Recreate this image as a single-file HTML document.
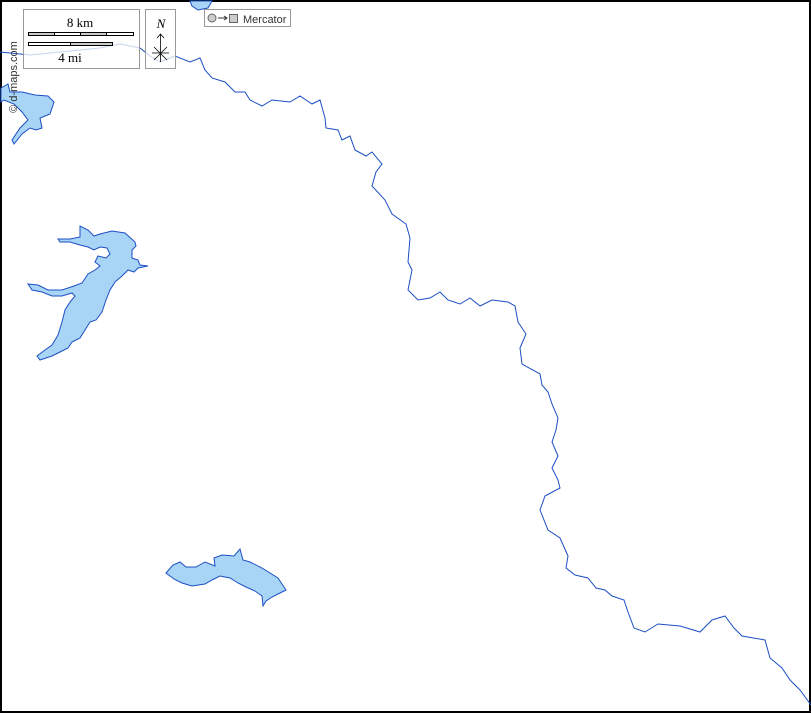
<!DOCTYPE html>
<html><head><meta charset="utf-8"><style>
html,body{margin:0;padding:0;background:#fff}
svg{display:block}
text{font-family:"Liberation Serif",serif}
</style></head><body>
<svg width="811" height="713" viewBox="0 0 811 713" xmlns="http://www.w3.org/2000/svg">
<rect x="1" y="1" width="809" height="711" fill="#fff" stroke="#000" stroke-width="2"/>
<g fill="#a8d4f5" stroke="#1c4fc4" stroke-width="1">
<path d="M190,1 L212,1 L208,8 L198,10 L192,6 Z"/>
<path d="M1,88 L8,84 L10,92 L22,92 L35,95 L48,96 L54,102 L50,114 L40,118 L42,128 L36,130 L30,128 L22,134 L14,144 L12,140 L20,128 L28,120 L22,112 L14,104 L4,100 L1,102 Z"/>
<path d="M28,284 L38,285 L48,290 L62,290 L74,286 L82,283 L88,274 L95,270 L100,266 L95,262 L98,256 L106,258 L110,254 L107,248 L100,247 L94,250 L88,247 L80,245 L70,242 L60,242 L58,239 L70,239 L80,237 L80,226 L88,230 L94,236 L100,234 L112,231 L125,233 L135,242 L136,246 L132,250 L132,258 L138,260 L140,265 L148,266 L138,268 L134,272 L128,270 L122,276 L115,282 L110,290 L106,300 L102,312 L96,320 L90,322 L85,330 L80,338 L72,342 L68,348 L60,352 L52,356 L40,360 L37,356 L45,350 L52,345 L58,335 L62,322 L65,310 L70,302 L75,296 L72,293 L62,296 L52,296 L42,292 L32,290 Z"/>
<path d="M166,573 L173,565 L180,562 L186,567 L196,567 L205,562 L215,566 L214,558 L222,555 L234,556 L240,549 L243,560 L250,562 L262,568 L270,573 L278,578 L286,590 L280,593 L272,597 L266,601 L263,606 L262,596 L255,591 L246,587 L238,583 L230,578 L220,576 L212,580 L205,584 L192,586 L182,583 L174,579 Z"/>
</g>
<path fill="none" stroke="#1c4fc4" stroke-width="1" d="M0,52 L30,55 L60,52 L100,48 L120,44 L140,48 L150,56 L160,62 L175,56 L190,62 L200,58 L205,70 L212,78 L225,82 L235,92 L245,92 L250,100 L262,106 L272,100 L290,102 L300,96 L312,104 L320,100 L325,118 L326,128 L338,130 L342,140 L350,136 L355,150 L366,156 L372,152 L382,164 L376,172 L372,186 L385,200 L392,214 L406,224 L410,238 L408,262 L412,270 L408,290 L418,300 L430,298 L440,292 L448,300 L460,304 L470,298 L480,306 L492,300 L508,302 L515,306 L518,322 L526,334 L520,348 L522,364 L540,374 L542,385 L548,392 L552,404 L558,418 L556,430 L552,442 L558,456 L552,468 L558,480 L560,488 L545,496 L540,510 L548,530 L560,538 L568,556 L566,568 L575,575 L588,578 L596,588 L605,590 L612,596 L624,600 L628,612 L634,628 L645,632 L658,624 L680,626 L700,632 L712,620 L725,616 L734,628 L742,636 L765,640 L770,658 L782,668 L790,680 L800,690 L811,705"/>
<rect x="23.5" y="9.5" width="116" height="59" fill="#fff" fill-opacity="0.75" stroke="#999"/>
<text x="80" y="27" font-size="13" text-anchor="middle">8 km</text>
<rect x="28.5" y="32.5" width="105" height="3" fill="#fff" stroke="#000"/>
<rect x="28.5" y="32.5" width="26" height="3" fill="#ccc" stroke="#000"/>
<rect x="80.5" y="32.5" width="26" height="3" fill="#ccc" stroke="#000"/>
<rect x="28.5" y="42.5" width="84" height="3" fill="#fff" stroke="#000"/>
<rect x="70.5" y="42.5" width="42" height="3" fill="#ccc" stroke="#000"/>
<text x="70" y="62" font-size="13" text-anchor="middle">4 mi</text>
<rect x="145.5" y="9.5" width="30" height="59" fill="#fff" fill-opacity="0.75" stroke="#999"/>
<text x="161" y="28" font-size="13" font-style="italic" text-anchor="middle">N</text>
<path d="M160.5,34 L160.5,62 M157,38 L160.5,34 L164,38 M152,53 L169,53 M154,47 L167,60 M167,47 L154,60" stroke="#000" fill="none" stroke-width="0.8"/>
<rect x="204.5" y="9.5" width="86" height="17" fill="#fff" stroke="#999"/>
<circle cx="212" cy="18" r="4" fill="#ccc" stroke="#666"/>
<path d="M218,18 L227,18 M224,16 L227,18 L224,20" stroke="#333" fill="none"/>
<rect x="229.5" y="14.5" width="8" height="8" fill="#ccc" stroke="#666"/>
<text x="243" y="23" font-size="11" fill="#333" style="font-family:'Liberation Sans',sans-serif">Mercator</text>
<text transform="translate(17,77) rotate(-90)" font-size="11" text-anchor="middle" style="font-family:'Liberation Sans',sans-serif" fill="#333">© d-maps.com</text>
</svg>
</body></html>
